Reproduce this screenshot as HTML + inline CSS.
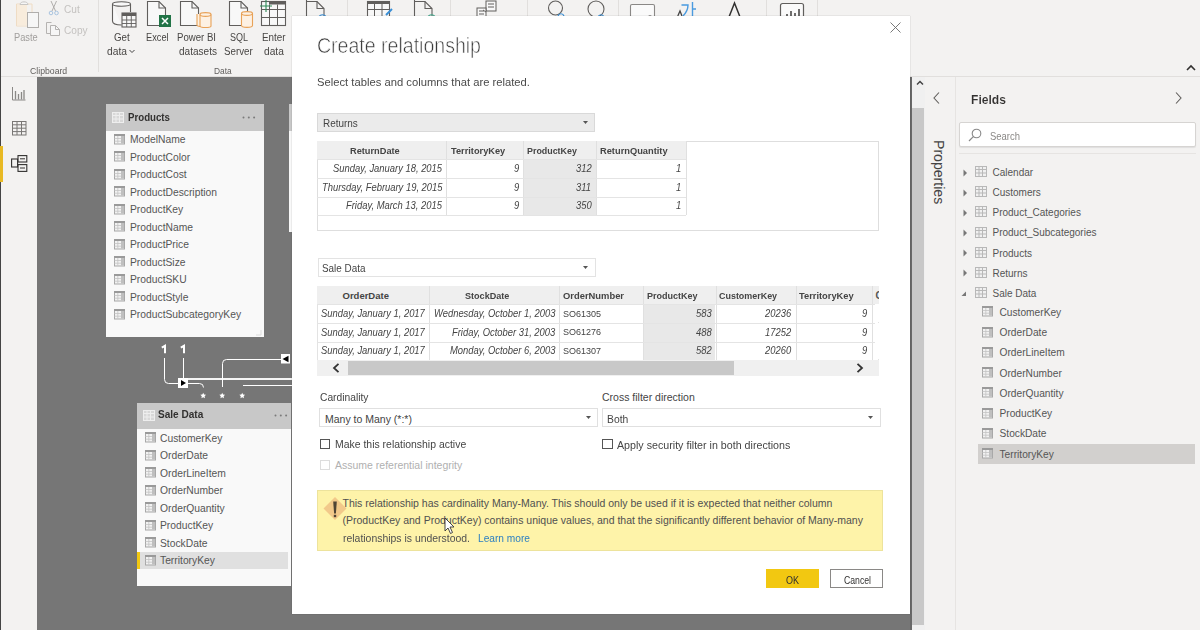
<!DOCTYPE html>
<html><head><meta charset="utf-8">
<style>
*{margin:0;padding:0;box-sizing:border-box}
html,body{width:1200px;height:630px;overflow:hidden;background:#f3f2f1;font-family:"Liberation Sans",sans-serif;color:#323130;position:relative}
.a{position:absolute}
.t{position:absolute;white-space:pre;line-height:1}
svg{position:absolute;overflow:visible}

</style></head><body>
<div class="a" style="left:0px;top:0px;width:1200px;height:76px;background:#f3f2f1"></div>
<div class="a" style="left:0px;top:76px;width:1200px;height:1px;background:#e1dfdd"></div>
<div class="a" style="left:0px;top:77px;width:37px;height:553px;background:#f3f2f1"></div>
<div class="a" style="left:0px;top:0px;width:1px;height:630px;background:#444"></div>
<div class="a" style="left:37px;top:77px;width:873px;height:553px;background:#767676"></div>
<div class="a" style="left:910px;top:77px;width:2px;height:553px;background:#686868"></div>
<div class="a" style="left:912px;top:77px;width:13px;height:553px;background:#f0f0f0"></div>
<div class="a" style="left:912px;top:108px;width:12px;height:517px;background:#c8c8c8"></div>
<div class="a" style="left:925px;top:77px;width:275px;height:553px;background:#f3f2f1"></div>
<div class="a" style="left:955px;top:77px;width:1px;height:553px;background:#e6e4e2"></div>
<div class="a" style="left:98px;top:0px;width:1px;height:72px;background:#e1dfdd"></div>
<div class="a" style="left:347px;top:0px;width:1px;height:72px;background:#e1dfdd"></div>
<div class="a" style="left:450px;top:0px;width:1px;height:72px;background:#e1dfdd"></div>
<div class="a" style="left:527px;top:0px;width:1px;height:72px;background:#e1dfdd"></div>
<div class="a" style="left:618px;top:0px;width:1px;height:72px;background:#e1dfdd"></div>
<div class="a" style="left:766px;top:0px;width:1px;height:72px;background:#e1dfdd"></div>
<div class="a" style="left:817px;top:0px;width:1px;height:72px;background:#e1dfdd"></div>
<div class="t" style="left:14.00px;top:32.73px;font-size:10px;color:#a19f9d;font-weight:normal;font-style:normal;transform:scaleX(0.9266);transform-origin:0 0;">Paste</div>
<div class="t" style="left:64.00px;top:5.03px;font-size:10px;color:#c4c2c0;font-weight:normal;font-style:normal;transform:scaleX(1.0088);transform-origin:0 0;">Cut</div>
<div class="t" style="left:64.00px;top:25.93px;font-size:10px;color:#c4c2c0;font-weight:normal;font-style:normal;transform:scaleX(1.0103);transform-origin:0 0;">Copy</div>
<div class="t" style="left:30.00px;top:67.32px;font-size:8.6px;color:#605e5c;font-weight:normal;font-style:normal;transform:scaleX(1.0110);transform-origin:0 0;">Clipboard</div>
<div class="t" style="left:114.00px;top:32.73px;font-size:10px;color:#484644;font-weight:normal;font-style:normal;transform:scaleX(0.9736);transform-origin:0 0;">Get</div>
<div class="t" style="left:107.00px;top:46.63px;font-size:10px;color:#484644;font-weight:normal;font-style:normal;transform:scaleX(1.0273);transform-origin:0 0;">data</div>
<div class="t" style="left:146.00px;top:32.73px;font-size:10px;color:#484644;font-weight:normal;font-style:normal;transform:scaleX(0.9242);transform-origin:0 0;">Excel</div>
<div class="t" style="left:177.00px;top:32.73px;font-size:10px;color:#484644;font-weight:normal;font-style:normal;transform:scaleX(0.9611);transform-origin:0 0;">Power BI</div>
<div class="t" style="left:179.00px;top:46.63px;font-size:10px;color:#484644;font-weight:normal;font-style:normal;transform:scaleX(1.0050);transform-origin:0 0;">datasets</div>
<div class="t" style="left:229.60px;top:32.73px;font-size:10px;color:#484644;font-weight:normal;font-style:normal;transform:scaleX(0.8993);transform-origin:0 0;">SQL</div>
<div class="t" style="left:224.30px;top:46.63px;font-size:10px;color:#484644;font-weight:normal;font-style:normal;transform:scaleX(0.9744);transform-origin:0 0;">Server</div>
<div class="t" style="left:261.70px;top:32.73px;font-size:10px;color:#484644;font-weight:normal;font-style:normal;transform:scaleX(0.9830);transform-origin:0 0;">Enter</div>
<div class="t" style="left:264.00px;top:46.63px;font-size:10px;color:#484644;font-weight:normal;font-style:normal;transform:scaleX(1.0170);transform-origin:0 0;">data</div>
<div class="t" style="left:213.50px;top:67.32px;font-size:8.6px;color:#605e5c;font-weight:normal;font-style:normal;transform:scaleX(0.9749);transform-origin:0 0;">Data</div>
<svg style="left:129px;top:49px" width="6" height="5"><path d="M0.5 1 L3 3.5 L5.5 1" stroke="#444" stroke-width="1" fill="none"/></svg>
<svg style="left:15px;top:0px" width="26" height="29"><path d="M1.5 4 V26 H12 M1.5 4 H5 M13 4 H17 V12" fill="none" stroke="#efdcc4" stroke-width="1"/><rect x="2" y="4.5" width="10" height="21" fill="#f8ecdc"/><path d="M5 4.5 C5 1 13 1 13 4.5 Z" fill="#f6f6f6" stroke="#c8c6c4"/><rect x="12.5" y="12.5" width="11" height="15" fill="#f6f6f6" stroke="#b0aeac" stroke-width="1"/></svg>
<svg style="left:48px;top:1px" width="11" height="15"><path d="M3 0 L7.5 10 M8.5 0 L4 10" stroke="#a8a6a4" stroke-width="0.9"/><circle cx="3" cy="12" r="1.8" fill="none" stroke="#a9c4e0"/><circle cx="8.5" cy="12" r="1.8" fill="none" stroke="#a9c4e0"/></svg>
<svg style="left:46px;top:22px" width="15" height="14"><path d="M5.5 11.5 H0.5 V0.5 H5.5" fill="none" stroke="#b5b3b1"/><path d="M4.5 3.5 H9.5 L13.5 7.5 V13.5 H4.5 Z" fill="#f6f6f6" stroke="#b5b3b1"/><path d="M9.5 3.5 V7.5 H13.5" fill="none" stroke="#b5b3b1"/></svg>
<svg style="left:111px;top:0px" width="26" height="29"><path d="M1.5 4 V21 C1.5 24 6 25 10.5 25 M1.5 4 C1.5 1 19.5 1 19.5 4 C19.5 7 1.5 7 1.5 4 M19.5 4 V12" stroke="#605e5c" stroke-width="1.1" fill="#f8f8f8"/><rect x="11" y="13" width="14" height="14" fill="#f8f8f8" stroke="#605e5c" stroke-width="1.1"/><rect x="11" y="13" width="14" height="3" fill="#605e5c"/><path d="M11 20 H25 M11 23.5 H25 M15.7 16 V27 M20.3 16 V27" stroke="#605e5c" stroke-width="0.9"/></svg>
<svg style="left:147px;top:1px" width="26" height="27"><path d="M0.5 0.5 H12 L18.5 7 V24.5 H0.5 Z" fill="#f8f8f8" stroke="#605e5c" stroke-width="1.1"/><path d="M12 0.5 V7 H18.5" fill="none" stroke="#605e5c" stroke-width="1.1"/><rect x="12" y="14" width="12" height="12" fill="#217346"/><path d="M15 17 L21 23 M21 17 L15 23" stroke="#fff" stroke-width="1.5"/></svg>
<svg style="left:180px;top:1px" width="34" height="27"><path d="M0.5 0.5 H12 L18.5 7 V24.5 H0.5 Z" fill="#f8f8f8" stroke="#605e5c" stroke-width="1.1"/><path d="M12 0.5 V7 H18.5" fill="none" stroke="#605e5c" stroke-width="1.1"/><path d="M17 13 V24 C17 26 27 26 27 24 V13" fill="#fdf1e3" stroke="#e8a258" stroke-width="1.1"/><path d="M20 13.5 C20 11 31 11 31 13.5 V25 C31 27 20 27 20 25 Z" fill="#fdf1e3" stroke="#e8a258" stroke-width="1.1"/><path d="M20 13.5 C20 16 31 16 31 13.5" fill="none" stroke="#e8a258" stroke-width="1.1"/></svg>
<svg style="left:229px;top:1px" width="26" height="27"><path d="M0.5 0.5 H12 L18.5 7 V24.5 H0.5 Z" fill="#f8f8f8" stroke="#605e5c" stroke-width="1.1"/><path d="M12 0.5 V7 H18.5" fill="none" stroke="#605e5c" stroke-width="1.1"/><path d="M12.5 12.5 C12.5 10 23.5 10 23.5 12.5 V24.5 C23.5 27 12.5 27 12.5 24.5 Z" fill="#fdf1e3" stroke="#e8a258" stroke-width="1.1"/><path d="M12.5 12.5 C12.5 15 23.5 15 23.5 12.5" fill="none" stroke="#e8a258" stroke-width="1.1"/></svg>
<svg style="left:260px;top:0px" width="28" height="27"><rect x="1.5" y="1.5" width="24" height="24" fill="#f8f8f8" stroke="#605e5c" stroke-width="1.1"/><rect x="9" y="1.5" width="16.5" height="3" fill="#605e5c"/><path d="M1.5 9.5 H25.5 M1.5 17.5 H25.5 M9.5 4.5 V25.5 M17.5 4.5 V25.5" stroke="#605e5c" stroke-width="1"/><path d="M6 0 V12 M0 6 H12" stroke="#2e8b57" stroke-width="1.1"/></svg>
<svg style="left:306px;top:0px" width="22" height="17"><path d="M0.5 -2 V17 M0.5 1.5 H11 L18 8.5 V17" fill="none" stroke="#605e5c" stroke-width="1.1"/><path d="M11 1.5 V8.5 H18" fill="none" stroke="#605e5c" stroke-width="1.1"/><path d="M13 17 C14 14 19 14 20 17" fill="none" stroke="#3a8fd6" stroke-width="1.2"/></svg>
<svg style="left:367px;top:0px" width="28" height="17"><rect x="0.5" y="1.5" width="22" height="18" fill="#f8f8f8" stroke="#605e5c" stroke-width="1.1"/><rect x="0.5" y="1" width="22" height="3" fill="#605e5c"/><path d="M0.5 9.5 H22 M7.5 4 V17 M15 4 V17" stroke="#605e5c" stroke-width="1"/><path d="M19 15 L25 9" stroke="#3a8fd6" stroke-width="2"/></svg>
<svg style="left:414px;top:0px" width="24" height="17"><path d="M0.5 -2 V17 M0.5 1.5 H11 L18 8.5 V17" fill="none" stroke="#605e5c" stroke-width="1.1"/><path d="M11 1.5 V8.5 H18" fill="none" stroke="#605e5c" stroke-width="1.1"/><path d="M14 17 C15 14 20 14 21 17" fill="none" stroke="#3fa68a" stroke-width="1.2"/></svg>
<svg style="left:476px;top:0px" width="26" height="17"><rect x="10" y="1" width="10" height="10" fill="#f8f8f8" stroke="#605e5c"/><path d="M12 4 H18 M12 7 H18" stroke="#605e5c"/><rect x="1" y="8" width="9" height="9" fill="#f8f8f8" stroke="#605e5c"/><path d="M3 11 H8 M3 14 H8" stroke="#605e5c"/><path d="M10 12 L7 10" stroke="#605e5c"/></svg>
<svg style="left:547px;top:0px" width="20" height="17"><circle cx="8.5" cy="8" r="7" fill="none" stroke="#605e5c" stroke-width="1.1"/><path d="M11 16 C12 13 16 13 17 16" fill="none" stroke="#3a8fd6" stroke-width="1.2"/></svg>
<svg style="left:587px;top:0px" width="20" height="17"><circle cx="9" cy="9" r="8" fill="none" stroke="#605e5c" stroke-width="1.1"/><path d="M11 17 C12 14 16 14 17 17" fill="none" stroke="#3a8fd6" stroke-width="1.2"/></svg>
<svg style="left:630px;top:4px" width="26" height="13"><rect x="0.5" y="0.5" width="24" height="18" rx="1.5" fill="#fafafa" stroke="#8a8886" stroke-width="1.1"/><path d="M18 13 C18 11 22 11 22 13" fill="none" stroke="#8a8886"/></svg>
<svg style="left:677px;top:2px" width="22" height="15"><path d="M0.8 14 L3 9 L5 14" fill="none" stroke="#444" stroke-width="1.3"/><path d="M4.5 3 H11 C11 8 9 11 6 14" fill="none" stroke="#4a9be0" stroke-width="1.4"/><path d="M15.5 0 V15 M15.5 7 H19" fill="none" stroke="#4a9be0" stroke-width="1.4"/></svg>
<svg style="left:728px;top:2px" width="13" height="15"><path d="M1 15 L6.5 1 L12 15" fill="none" stroke="#323130" stroke-width="1.5"/></svg>
<svg style="left:780px;top:3px" width="25" height="14"><rect x="0.5" y="0.5" width="23" height="18" rx="2" fill="#fafafa" stroke="#605e5c" stroke-width="1.2"/><path d="M7 13 V11 M11 13 V8 M15 13 V10 M19 13 V6" stroke="#323130" stroke-width="1.4"/></svg>
<svg style="left:1186px;top:64px" width="10" height="7"><path d="M1 6 L5 2 L9 6" fill="none" stroke="#323130" stroke-width="1.6"/></svg>
<div class="a" style="left:0px;top:146px;width:3px;height:36px;background:#e8b923"></div>
<svg style="left:12px;top:87px" width="14" height="14"><path d="M0.5 0 V13 H13.5" fill="none" stroke="#8a8886" stroke-width="1"/><path d="M3.5 4 V12.5 M6.5 7 V12.5 M9.5 5 V12.5 M12 3 V12.5" stroke="#8a8886" stroke-width="1.3"/></svg>
<svg style="left:12px;top:121px" width="15" height="15"><rect x="0.5" y="0.5" width="13.5" height="13.5" fill="none" stroke="#797775"/><path d="M0.5 3.8 H14 M0.5 7.2 H14 M0.5 10.6 H14 M5 0.5 V14 M9.5 0.5 V14" stroke="#797775" stroke-width="1"/></svg>
<svg style="left:11px;top:155px" width="17" height="18"><rect x="0.6" y="4" width="6" height="8" fill="none" stroke="#323130" stroke-width="1.1"/><rect x="7" y="0.6" width="8.8" height="6.4" fill="none" stroke="#323130" stroke-width="1.1"/><rect x="7" y="9.6" width="8.8" height="6.8" fill="none" stroke="#323130" stroke-width="1.1"/><path d="M9 3.8 H14 M9 13 H14" stroke="#323130" stroke-width="1"/></svg>
<div class="a" style="left:289px;top:104px;width:3px;height:128px;background:#f8f8f8"></div>
<div class="a" style="left:289px;top:104px;width:3px;height:27px;background:#c8c8c8"></div>
<div class="a" style="left:106px;top:104px;width:158px;height:233px;background:#f9f9f9"></div>
<div class="a" style="left:106px;top:104px;width:158px;height:27px;background:#c8c8c8"></div>
<svg style="left:112px;top:112px" width="12" height="11"><rect x="0.5" y="0.5" width="11" height="10" fill="#d8d8d8" stroke="#eeeeee"/><path d="M0.5 3.5 H11.5 M0.5 7 H11.5 M4 0.5 V10.5 M7.5 0.5 V10.5" stroke="#eeeeee" stroke-width="1"/></svg>
<div class="t" style="left:128.00px;top:111.69px;font-size:11px;color:#323130;font-weight:bold;font-style:normal;transform:scaleX(0.8807);transform-origin:0 0;">Products</div>
<svg style="left:242px;top:116px" width="14" height="3"><circle cx="1.5" cy="1.5" r="1" fill="#7a7a7a"/><circle cx="6.8" cy="1.5" r="1" fill="#7a7a7a"/><circle cx="12.1" cy="1.5" r="1" fill="#7a7a7a"/></svg>
<svg style="left:114.2px;top:133.60000000000002px" width="12" height="11"><rect x="0.5" y="0.5" width="10" height="9.5" fill="#f2f2f2" stroke="#a8a8a8"/><rect x="7" y="1" width="3" height="8.5" fill="#bfbfbf"/><rect x="0" y="0" width="11" height="2" fill="#9a9a9a"/><path d="M0.5 4.5 H7 M0.5 7.2 H7 M3.8 2 V9.5" stroke="#c4c4c4" stroke-width="0.8"/></svg>
<div class="t" style="left:130.00px;top:135.08px;font-size:10.3px;color:#555;font-weight:normal;font-style:normal;">ModelName</div>
<svg style="left:114.2px;top:151.10000000000002px" width="12" height="11"><rect x="0.5" y="0.5" width="10" height="9.5" fill="#f2f2f2" stroke="#a8a8a8"/><rect x="7" y="1" width="3" height="8.5" fill="#bfbfbf"/><rect x="0" y="0" width="11" height="2" fill="#9a9a9a"/><path d="M0.5 4.5 H7 M0.5 7.2 H7 M3.8 2 V9.5" stroke="#c4c4c4" stroke-width="0.8"/></svg>
<div class="t" style="left:130.00px;top:152.58px;font-size:10.3px;color:#555;font-weight:normal;font-style:normal;">ProductColor</div>
<svg style="left:114.2px;top:168.60000000000002px" width="12" height="11"><rect x="0.5" y="0.5" width="10" height="9.5" fill="#f2f2f2" stroke="#a8a8a8"/><rect x="7" y="1" width="3" height="8.5" fill="#bfbfbf"/><rect x="0" y="0" width="11" height="2" fill="#9a9a9a"/><path d="M0.5 4.5 H7 M0.5 7.2 H7 M3.8 2 V9.5" stroke="#c4c4c4" stroke-width="0.8"/></svg>
<div class="t" style="left:130.00px;top:170.08px;font-size:10.3px;color:#555;font-weight:normal;font-style:normal;">ProductCost</div>
<svg style="left:114.2px;top:186.10000000000002px" width="12" height="11"><rect x="0.5" y="0.5" width="10" height="9.5" fill="#f2f2f2" stroke="#a8a8a8"/><rect x="7" y="1" width="3" height="8.5" fill="#bfbfbf"/><rect x="0" y="0" width="11" height="2" fill="#9a9a9a"/><path d="M0.5 4.5 H7 M0.5 7.2 H7 M3.8 2 V9.5" stroke="#c4c4c4" stroke-width="0.8"/></svg>
<div class="t" style="left:130.00px;top:187.58px;font-size:10.3px;color:#555;font-weight:normal;font-style:normal;">ProductDescription</div>
<svg style="left:114.2px;top:203.60000000000002px" width="12" height="11"><rect x="0.5" y="0.5" width="10" height="9.5" fill="#f2f2f2" stroke="#a8a8a8"/><rect x="7" y="1" width="3" height="8.5" fill="#bfbfbf"/><rect x="0" y="0" width="11" height="2" fill="#9a9a9a"/><path d="M0.5 4.5 H7 M0.5 7.2 H7 M3.8 2 V9.5" stroke="#c4c4c4" stroke-width="0.8"/></svg>
<div class="t" style="left:130.00px;top:205.08px;font-size:10.3px;color:#555;font-weight:normal;font-style:normal;">ProductKey</div>
<svg style="left:114.2px;top:221.10000000000002px" width="12" height="11"><rect x="0.5" y="0.5" width="10" height="9.5" fill="#f2f2f2" stroke="#a8a8a8"/><rect x="7" y="1" width="3" height="8.5" fill="#bfbfbf"/><rect x="0" y="0" width="11" height="2" fill="#9a9a9a"/><path d="M0.5 4.5 H7 M0.5 7.2 H7 M3.8 2 V9.5" stroke="#c4c4c4" stroke-width="0.8"/></svg>
<div class="t" style="left:130.00px;top:222.58px;font-size:10.3px;color:#555;font-weight:normal;font-style:normal;">ProductName</div>
<svg style="left:114.2px;top:238.60000000000002px" width="12" height="11"><rect x="0.5" y="0.5" width="10" height="9.5" fill="#f2f2f2" stroke="#a8a8a8"/><rect x="7" y="1" width="3" height="8.5" fill="#bfbfbf"/><rect x="0" y="0" width="11" height="2" fill="#9a9a9a"/><path d="M0.5 4.5 H7 M0.5 7.2 H7 M3.8 2 V9.5" stroke="#c4c4c4" stroke-width="0.8"/></svg>
<div class="t" style="left:130.00px;top:240.08px;font-size:10.3px;color:#555;font-weight:normal;font-style:normal;">ProductPrice</div>
<svg style="left:114.2px;top:256.09999999999997px" width="12" height="11"><rect x="0.5" y="0.5" width="10" height="9.5" fill="#f2f2f2" stroke="#a8a8a8"/><rect x="7" y="1" width="3" height="8.5" fill="#bfbfbf"/><rect x="0" y="0" width="11" height="2" fill="#9a9a9a"/><path d="M0.5 4.5 H7 M0.5 7.2 H7 M3.8 2 V9.5" stroke="#c4c4c4" stroke-width="0.8"/></svg>
<div class="t" style="left:130.00px;top:257.58px;font-size:10.3px;color:#555;font-weight:normal;font-style:normal;">ProductSize</div>
<svg style="left:114.2px;top:273.59999999999997px" width="12" height="11"><rect x="0.5" y="0.5" width="10" height="9.5" fill="#f2f2f2" stroke="#a8a8a8"/><rect x="7" y="1" width="3" height="8.5" fill="#bfbfbf"/><rect x="0" y="0" width="11" height="2" fill="#9a9a9a"/><path d="M0.5 4.5 H7 M0.5 7.2 H7 M3.8 2 V9.5" stroke="#c4c4c4" stroke-width="0.8"/></svg>
<div class="t" style="left:130.00px;top:275.08px;font-size:10.3px;color:#555;font-weight:normal;font-style:normal;">ProductSKU</div>
<svg style="left:114.2px;top:291.09999999999997px" width="12" height="11"><rect x="0.5" y="0.5" width="10" height="9.5" fill="#f2f2f2" stroke="#a8a8a8"/><rect x="7" y="1" width="3" height="8.5" fill="#bfbfbf"/><rect x="0" y="0" width="11" height="2" fill="#9a9a9a"/><path d="M0.5 4.5 H7 M0.5 7.2 H7 M3.8 2 V9.5" stroke="#c4c4c4" stroke-width="0.8"/></svg>
<div class="t" style="left:130.00px;top:292.58px;font-size:10.3px;color:#555;font-weight:normal;font-style:normal;">ProductStyle</div>
<svg style="left:114.2px;top:308.59999999999997px" width="12" height="11"><rect x="0.5" y="0.5" width="10" height="9.5" fill="#f2f2f2" stroke="#a8a8a8"/><rect x="7" y="1" width="3" height="8.5" fill="#bfbfbf"/><rect x="0" y="0" width="11" height="2" fill="#9a9a9a"/><path d="M0.5 4.5 H7 M0.5 7.2 H7 M3.8 2 V9.5" stroke="#c4c4c4" stroke-width="0.8"/></svg>
<div class="t" style="left:130.00px;top:310.08px;font-size:10.3px;color:#555;font-weight:normal;font-style:normal;">ProductSubcategoryKey</div>
<svg style="left:256px;top:330px" width="6" height="6"><path d="M5 0 V5 H0" fill="none" stroke="#ddd"/></svg>
<svg style="left:150px;top:340px" width="145" height="65">
<path d="M14.5 18 V39.5 Q14.5 43.5 18.5 43.5 H30" fill="none" stroke="#fff" stroke-width="1"/>
<path d="M33.5 18 V38" fill="none" stroke="#fff" stroke-width="1"/>
<path d="M37 39 H145" fill="none" stroke="#f4f4f4" stroke-width="2"/>
<path d="M37 43.5 H49.5 Q53.5 43.5 53.5 47.5" fill="none" stroke="#fff" stroke-width="1"/>
<path d="M72.5 47 V23.5 Q72.5 19.5 76.5 19.5 H131" fill="none" stroke="#fff" stroke-width="1"/>
<path d="M93 45.5 H145" fill="none" stroke="#fff" stroke-width="1"/>
<rect x="28" y="38" width="10" height="10" fill="#fff"/>
<path d="M31 40 L36 43 L31 46 Z" fill="#000"/>
<rect x="131" y="14" width="9" height="9.5" fill="#fff"/>
<path d="M138.5 15.8 L132.5 19 L138.5 22.2 Z" fill="#000"/>
<polygon points="53.20,52.80 54.08,54.59 56.05,54.87 54.63,56.26 54.96,58.23 53.20,57.30 51.44,58.23 51.77,56.26 50.35,54.87 52.32,54.59" fill="#fff"/><polygon points="72.20,52.80 73.08,54.59 75.05,54.87 73.63,56.26 73.96,58.23 72.20,57.30 70.44,58.23 70.77,56.26 69.35,54.87 71.32,54.59" fill="#fff"/><polygon points="92.20,52.80 93.08,54.59 95.05,54.87 93.63,56.26 93.96,58.23 92.20,57.30 90.44,58.23 90.77,56.26 89.35,54.87 91.32,54.59" fill="#fff"/>
</svg>
<svg style="left:160px;top:345px" width="30" height="9"><path d="M1.8 2.6 L5 0.8 V8.2 M20.8 2.6 L24 0.8 V8.2" fill="none" stroke="#fff" stroke-width="2"/></svg>
<div class="a" style="left:137px;top:402.5px;width:154px;height:183.5px;background:#f9f9f9"></div>
<div class="a" style="left:137px;top:402.5px;width:154px;height:26px;background:#c8c8c8"></div>
<svg style="left:143px;top:410px" width="12" height="11"><rect x="0.5" y="0.5" width="11" height="10" fill="#d8d8d8" stroke="#eeeeee"/><path d="M0.5 3.5 H11.5 M0.5 7 H11.5 M4 0.5 V10.5 M7.5 0.5 V10.5" stroke="#eeeeee" stroke-width="1"/></svg>
<div class="t" style="left:158.00px;top:409.29px;font-size:11px;color:#323130;font-weight:bold;font-style:normal;transform:scaleX(0.9146);transform-origin:0 0;">Sale Data</div>
<svg style="left:274px;top:414px" width="14" height="3"><circle cx="1.5" cy="1.5" r="1" fill="#7a7a7a"/><circle cx="6.8" cy="1.5" r="1" fill="#7a7a7a"/><circle cx="12.1" cy="1.5" r="1" fill="#7a7a7a"/></svg>
<div class="a" style="left:137px;top:552px;width:151px;height:17px;background:#e0e0e0"></div>
<div class="a" style="left:137px;top:552px;width:3px;height:17px;background:#f2c811"></div>
<svg style="left:145px;top:432.09999999999997px" width="12" height="11"><rect x="0.5" y="0.5" width="10" height="9.5" fill="#f2f2f2" stroke="#a8a8a8"/><rect x="7" y="1" width="3" height="8.5" fill="#bfbfbf"/><rect x="0" y="0" width="11" height="2" fill="#9a9a9a"/><path d="M0.5 4.5 H7 M0.5 7.2 H7 M3.8 2 V9.5" stroke="#c4c4c4" stroke-width="0.8"/></svg>
<div class="t" style="left:160.00px;top:433.58px;font-size:10.3px;color:#555;font-weight:normal;font-style:normal;">CustomerKey</div>
<svg style="left:145px;top:449.59999999999997px" width="12" height="11"><rect x="0.5" y="0.5" width="10" height="9.5" fill="#f2f2f2" stroke="#a8a8a8"/><rect x="7" y="1" width="3" height="8.5" fill="#bfbfbf"/><rect x="0" y="0" width="11" height="2" fill="#9a9a9a"/><path d="M0.5 4.5 H7 M0.5 7.2 H7 M3.8 2 V9.5" stroke="#c4c4c4" stroke-width="0.8"/></svg>
<div class="t" style="left:160.00px;top:451.08px;font-size:10.3px;color:#555;font-weight:normal;font-style:normal;">OrderDate</div>
<svg style="left:145px;top:467.09999999999997px" width="12" height="11"><rect x="0.5" y="0.5" width="10" height="9.5" fill="#f2f2f2" stroke="#a8a8a8"/><rect x="7" y="1" width="3" height="8.5" fill="#bfbfbf"/><rect x="0" y="0" width="11" height="2" fill="#9a9a9a"/><path d="M0.5 4.5 H7 M0.5 7.2 H7 M3.8 2 V9.5" stroke="#c4c4c4" stroke-width="0.8"/></svg>
<div class="t" style="left:160.00px;top:468.58px;font-size:10.3px;color:#555;font-weight:normal;font-style:normal;">OrderLineItem</div>
<svg style="left:145px;top:484.59999999999997px" width="12" height="11"><rect x="0.5" y="0.5" width="10" height="9.5" fill="#f2f2f2" stroke="#a8a8a8"/><rect x="7" y="1" width="3" height="8.5" fill="#bfbfbf"/><rect x="0" y="0" width="11" height="2" fill="#9a9a9a"/><path d="M0.5 4.5 H7 M0.5 7.2 H7 M3.8 2 V9.5" stroke="#c4c4c4" stroke-width="0.8"/></svg>
<div class="t" style="left:160.00px;top:486.08px;font-size:10.3px;color:#555;font-weight:normal;font-style:normal;">OrderNumber</div>
<svg style="left:145px;top:502.09999999999997px" width="12" height="11"><rect x="0.5" y="0.5" width="10" height="9.5" fill="#f2f2f2" stroke="#a8a8a8"/><rect x="7" y="1" width="3" height="8.5" fill="#bfbfbf"/><rect x="0" y="0" width="11" height="2" fill="#9a9a9a"/><path d="M0.5 4.5 H7 M0.5 7.2 H7 M3.8 2 V9.5" stroke="#c4c4c4" stroke-width="0.8"/></svg>
<div class="t" style="left:160.00px;top:503.58px;font-size:10.3px;color:#555;font-weight:normal;font-style:normal;">OrderQuantity</div>
<svg style="left:145px;top:519.5999999999999px" width="12" height="11"><rect x="0.5" y="0.5" width="10" height="9.5" fill="#f2f2f2" stroke="#a8a8a8"/><rect x="7" y="1" width="3" height="8.5" fill="#bfbfbf"/><rect x="0" y="0" width="11" height="2" fill="#9a9a9a"/><path d="M0.5 4.5 H7 M0.5 7.2 H7 M3.8 2 V9.5" stroke="#c4c4c4" stroke-width="0.8"/></svg>
<div class="t" style="left:160.00px;top:521.08px;font-size:10.3px;color:#555;font-weight:normal;font-style:normal;">ProductKey</div>
<svg style="left:145px;top:537.0999999999999px" width="12" height="11"><rect x="0.5" y="0.5" width="10" height="9.5" fill="#f2f2f2" stroke="#a8a8a8"/><rect x="7" y="1" width="3" height="8.5" fill="#bfbfbf"/><rect x="0" y="0" width="11" height="2" fill="#9a9a9a"/><path d="M0.5 4.5 H7 M0.5 7.2 H7 M3.8 2 V9.5" stroke="#c4c4c4" stroke-width="0.8"/></svg>
<div class="t" style="left:160.00px;top:538.58px;font-size:10.3px;color:#555;font-weight:normal;font-style:normal;">StockDate</div>
<svg style="left:145px;top:554.5999999999999px" width="12" height="11"><rect x="0.5" y="0.5" width="10" height="9.5" fill="#f2f2f2" stroke="#a8a8a8"/><rect x="7" y="1" width="3" height="8.5" fill="#bfbfbf"/><rect x="0" y="0" width="11" height="2" fill="#9a9a9a"/><path d="M0.5 4.5 H7 M0.5 7.2 H7 M3.8 2 V9.5" stroke="#c4c4c4" stroke-width="0.8"/></svg>
<div class="t" style="left:160.00px;top:556.08px;font-size:10.3px;color:#555;font-weight:normal;font-style:normal;">TerritoryKey</div>
<svg style="left:916px;top:80px" width="8" height="5"><path d="M1 4.5 L4 1.5 L7 4.5" fill="none" stroke="#444" stroke-width="1.5"/></svg>
<svg style="left:933px;top:92px" width="7" height="12"><path d="M6 0.5 L1 6 L6 11.5" fill="none" stroke="#605e5c" stroke-width="1.1"/></svg>
<div class="t" style="left:0.00px;top:0.00px;font-size:13.8px;color:#444;font-weight:normal;font-style:normal;transform:translate(931.60px,140.00px) rotate(90deg) scaleX(1.0208) translate(0,-13.80px);transform-origin:0 0;">Properties</div>
<div class="t" style="left:971.00px;top:92.79px;font-size:13px;color:#323130;font-weight:bold;font-style:normal;transform:scaleX(0.9314);transform-origin:0 0;-webkit-text-stroke:0.12px #f3f2f1;">Fields</div>
<svg style="left:1175px;top:92px" width="7" height="12"><path d="M1 0.5 L6 6 L1 11.5" fill="none" stroke="#605e5c" stroke-width="1.1"/></svg>
<div class="a" style="left:959px;top:122px;width:237px;height:25px;background:#fff;border:1px solid #d6d4d2;border-radius:2px;box-shadow:0 1px 1px rgba(0,0,0,.08)"></div>
<svg style="left:968px;top:128px" width="14" height="14"><circle cx="8.5" cy="5.5" r="4.3" fill="none" stroke="#888" stroke-width="1.1"/><path d="M5.3 8.7 L1 13" stroke="#888" stroke-width="1.2"/></svg>
<div class="t" style="left:990.00px;top:131.11px;font-size:10.5px;color:#8a8886;font-weight:normal;font-style:normal;transform:scaleX(0.9014);transform-origin:0 0;">Search</div>
<div class="a" style="left:959px;top:153px;width:237px;height:1px;background:#e6e4e2"></div>
<svg style="left:963px;top:168.6px" width="5" height="8"><path d="M0.5 0.5 L4 4 L0.5 7.5 Z" fill="#777"/></svg>
<svg style="left:975px;top:166.1px" width="12" height="11"><rect x="0.5" y="0.5" width="11" height="10" fill="#f0f0f0" stroke="#b8b8b8"/><path d="M0.5 3.5 H11.5 M0.5 7 H11.5 M4 0.5 V10.5 M7.5 0.5 V10.5" stroke="#b8b8b8" stroke-width="1"/></svg>
<div class="t" style="left:992.50px;top:167.93px;font-size:10px;color:#555;font-weight:normal;font-style:normal;">Calendar</div>
<svg style="left:963px;top:188.75px" width="5" height="8"><path d="M0.5 0.5 L4 4 L0.5 7.5 Z" fill="#777"/></svg>
<svg style="left:975px;top:186.25px" width="12" height="11"><rect x="0.5" y="0.5" width="11" height="10" fill="#f0f0f0" stroke="#b8b8b8"/><path d="M0.5 3.5 H11.5 M0.5 7 H11.5 M4 0.5 V10.5 M7.5 0.5 V10.5" stroke="#b8b8b8" stroke-width="1"/></svg>
<div class="t" style="left:992.50px;top:188.08px;font-size:10px;color:#555;font-weight:normal;font-style:normal;">Customers</div>
<svg style="left:963px;top:208.89999999999998px" width="5" height="8"><path d="M0.5 0.5 L4 4 L0.5 7.5 Z" fill="#777"/></svg>
<svg style="left:975px;top:206.39999999999998px" width="12" height="11"><rect x="0.5" y="0.5" width="11" height="10" fill="#f0f0f0" stroke="#b8b8b8"/><path d="M0.5 3.5 H11.5 M0.5 7 H11.5 M4 0.5 V10.5 M7.5 0.5 V10.5" stroke="#b8b8b8" stroke-width="1"/></svg>
<div class="t" style="left:992.50px;top:208.23px;font-size:10px;color:#555;font-weight:normal;font-style:normal;">Product_Categories</div>
<svg style="left:963px;top:229.04999999999998px" width="5" height="8"><path d="M0.5 0.5 L4 4 L0.5 7.5 Z" fill="#777"/></svg>
<svg style="left:975px;top:226.54999999999998px" width="12" height="11"><rect x="0.5" y="0.5" width="11" height="10" fill="#f0f0f0" stroke="#b8b8b8"/><path d="M0.5 3.5 H11.5 M0.5 7 H11.5 M4 0.5 V10.5 M7.5 0.5 V10.5" stroke="#b8b8b8" stroke-width="1"/></svg>
<div class="t" style="left:992.50px;top:228.38px;font-size:10px;color:#555;font-weight:normal;font-style:normal;">Product_Subcategories</div>
<svg style="left:963px;top:249.2px" width="5" height="8"><path d="M0.5 0.5 L4 4 L0.5 7.5 Z" fill="#777"/></svg>
<svg style="left:975px;top:246.7px" width="12" height="11"><rect x="0.5" y="0.5" width="11" height="10" fill="#f0f0f0" stroke="#b8b8b8"/><path d="M0.5 3.5 H11.5 M0.5 7 H11.5 M4 0.5 V10.5 M7.5 0.5 V10.5" stroke="#b8b8b8" stroke-width="1"/></svg>
<div class="t" style="left:992.50px;top:248.53px;font-size:10px;color:#555;font-weight:normal;font-style:normal;">Products</div>
<svg style="left:963px;top:269.35px" width="5" height="8"><path d="M0.5 0.5 L4 4 L0.5 7.5 Z" fill="#777"/></svg>
<svg style="left:975px;top:266.85px" width="12" height="11"><rect x="0.5" y="0.5" width="11" height="10" fill="#f0f0f0" stroke="#b8b8b8"/><path d="M0.5 3.5 H11.5 M0.5 7 H11.5 M4 0.5 V10.5 M7.5 0.5 V10.5" stroke="#b8b8b8" stroke-width="1"/></svg>
<div class="t" style="left:992.50px;top:268.68px;font-size:10px;color:#555;font-weight:normal;font-style:normal;">Returns</div>
<svg style="left:961px;top:290.5px" width="6" height="6"><path d="M5 0.5 V5 H0.5 Z" fill="#777"/></svg>
<svg style="left:975px;top:287.0px" width="12" height="11"><rect x="0.5" y="0.5" width="11" height="10" fill="#f0f0f0" stroke="#b8b8b8"/><path d="M0.5 3.5 H11.5 M0.5 7 H11.5 M4 0.5 V10.5 M7.5 0.5 V10.5" stroke="#b8b8b8" stroke-width="1"/></svg>
<div class="t" style="left:992.50px;top:288.83px;font-size:10px;color:#555;font-weight:normal;font-style:normal;">Sale Data</div>
<div class="a" style="left:978px;top:444px;width:217px;height:20px;background:#d2d0ce"></div>
<svg style="left:982px;top:306.44999999999993px" width="12" height="11"><rect x="0.5" y="0.5" width="10" height="9.5" fill="#f2f2f2" stroke="#a8a8a8"/><rect x="7" y="1" width="3" height="8.5" fill="#bfbfbf"/><rect x="0" y="0" width="11" height="2" fill="#9a9a9a"/><path d="M0.5 4.5 H7 M0.5 7.2 H7 M3.8 2 V9.5" stroke="#c4c4c4" stroke-width="0.8"/></svg>
<div class="t" style="left:999.50px;top:307.81px;font-size:10.2px;color:#555;font-weight:normal;font-style:normal;">CustomerKey</div>
<svg style="left:982px;top:326.69999999999993px" width="12" height="11"><rect x="0.5" y="0.5" width="10" height="9.5" fill="#f2f2f2" stroke="#a8a8a8"/><rect x="7" y="1" width="3" height="8.5" fill="#bfbfbf"/><rect x="0" y="0" width="11" height="2" fill="#9a9a9a"/><path d="M0.5 4.5 H7 M0.5 7.2 H7 M3.8 2 V9.5" stroke="#c4c4c4" stroke-width="0.8"/></svg>
<div class="t" style="left:999.50px;top:328.06px;font-size:10.2px;color:#555;font-weight:normal;font-style:normal;">OrderDate</div>
<svg style="left:982px;top:346.94999999999993px" width="12" height="11"><rect x="0.5" y="0.5" width="10" height="9.5" fill="#f2f2f2" stroke="#a8a8a8"/><rect x="7" y="1" width="3" height="8.5" fill="#bfbfbf"/><rect x="0" y="0" width="11" height="2" fill="#9a9a9a"/><path d="M0.5 4.5 H7 M0.5 7.2 H7 M3.8 2 V9.5" stroke="#c4c4c4" stroke-width="0.8"/></svg>
<div class="t" style="left:999.50px;top:348.31px;font-size:10.2px;color:#555;font-weight:normal;font-style:normal;">OrderLineItem</div>
<svg style="left:982px;top:367.19999999999993px" width="12" height="11"><rect x="0.5" y="0.5" width="10" height="9.5" fill="#f2f2f2" stroke="#a8a8a8"/><rect x="7" y="1" width="3" height="8.5" fill="#bfbfbf"/><rect x="0" y="0" width="11" height="2" fill="#9a9a9a"/><path d="M0.5 4.5 H7 M0.5 7.2 H7 M3.8 2 V9.5" stroke="#c4c4c4" stroke-width="0.8"/></svg>
<div class="t" style="left:999.50px;top:368.56px;font-size:10.2px;color:#555;font-weight:normal;font-style:normal;">OrderNumber</div>
<svg style="left:982px;top:387.44999999999993px" width="12" height="11"><rect x="0.5" y="0.5" width="10" height="9.5" fill="#f2f2f2" stroke="#a8a8a8"/><rect x="7" y="1" width="3" height="8.5" fill="#bfbfbf"/><rect x="0" y="0" width="11" height="2" fill="#9a9a9a"/><path d="M0.5 4.5 H7 M0.5 7.2 H7 M3.8 2 V9.5" stroke="#c4c4c4" stroke-width="0.8"/></svg>
<div class="t" style="left:999.50px;top:388.81px;font-size:10.2px;color:#555;font-weight:normal;font-style:normal;">OrderQuantity</div>
<svg style="left:982px;top:407.69999999999993px" width="12" height="11"><rect x="0.5" y="0.5" width="10" height="9.5" fill="#f2f2f2" stroke="#a8a8a8"/><rect x="7" y="1" width="3" height="8.5" fill="#bfbfbf"/><rect x="0" y="0" width="11" height="2" fill="#9a9a9a"/><path d="M0.5 4.5 H7 M0.5 7.2 H7 M3.8 2 V9.5" stroke="#c4c4c4" stroke-width="0.8"/></svg>
<div class="t" style="left:999.50px;top:409.06px;font-size:10.2px;color:#555;font-weight:normal;font-style:normal;">ProductKey</div>
<svg style="left:982px;top:427.94999999999993px" width="12" height="11"><rect x="0.5" y="0.5" width="10" height="9.5" fill="#f2f2f2" stroke="#a8a8a8"/><rect x="7" y="1" width="3" height="8.5" fill="#bfbfbf"/><rect x="0" y="0" width="11" height="2" fill="#9a9a9a"/><path d="M0.5 4.5 H7 M0.5 7.2 H7 M3.8 2 V9.5" stroke="#c4c4c4" stroke-width="0.8"/></svg>
<div class="t" style="left:999.50px;top:429.31px;font-size:10.2px;color:#555;font-weight:normal;font-style:normal;">StockDate</div>
<svg style="left:982px;top:448.19999999999993px" width="12" height="11"><rect x="0.5" y="0.5" width="10" height="9.5" fill="#f2f2f2" stroke="#a8a8a8"/><rect x="7" y="1" width="3" height="8.5" fill="#bfbfbf"/><rect x="0" y="0" width="11" height="2" fill="#9a9a9a"/><path d="M0.5 4.5 H7 M0.5 7.2 H7 M3.8 2 V9.5" stroke="#c4c4c4" stroke-width="0.8"/></svg>
<div class="t" style="left:999.50px;top:449.56px;font-size:10.2px;color:#555;font-weight:normal;font-style:normal;">TerritoryKey</div>
<div class="a" style="left:291.5px;top:16.3px;width:618.3px;height:597.3px;background:#fff;box-shadow:0 0 1px 0 rgba(0,0,0,.3)"></div>
<svg style="left:890px;top:22px" width="11" height="11"><path d="M0.5 0.5 L10.5 10.5 M10.5 0.5 L0.5 10.5" stroke="#6a6a6a" stroke-width="0.9"/></svg>
<div class="t" style="left:317.20px;top:36.40px;font-size:21.5px;color:#3a3a3a;font-weight:normal;font-style:normal;transform:scaleX(0.9087);transform-origin:0 0;-webkit-text-stroke:0.6px #fff;">Create relationship</div>
<div class="t" style="left:317.00px;top:76.71px;font-size:11.8px;color:#4a4a4a;font-weight:normal;font-style:normal;transform:scaleX(0.9525);transform-origin:0 0;">Select tables and columns that are related.</div>
<div class="a" style="left:317px;top:113px;width:278px;height:19px;background:#ebebeb;border:1px solid #d9d9d9"></div>
<div class="t" style="left:322.50px;top:119.23px;font-size:10px;color:#444;font-weight:normal;font-style:normal;transform:scaleX(0.9938);transform-origin:0 0;">Returns</div>
<svg style="left:583px;top:121px" width="5" height="3"><path d="M0 0 H5 L2.5 3 Z" fill="#555"/></svg>
<div class="a" style="left:317px;top:141px;width:562px;height:90px;background:#fff;border:1px solid #dedede"></div>
<div class="a" style="left:317px;top:141px;width:369px;height:18px;background:#efefef"></div>
<div class="a" style="left:523px;top:159px;width:73px;height:56px;background:#e8e8e8"></div>
<div class="a" style="left:446px;top:141px;width:1px;height:74px;background:#e0e0e0"></div>
<div class="a" style="left:523px;top:141px;width:1px;height:74px;background:#e0e0e0"></div>
<div class="a" style="left:596px;top:141px;width:1px;height:74px;background:#e0e0e0"></div>
<div class="a" style="left:686px;top:141px;width:1px;height:74px;background:#e0e0e0"></div>
<div class="a" style="left:317px;top:159px;width:369px;height:1px;background:#e4e4e4"></div>
<div class="a" style="left:317px;top:178px;width:369px;height:1px;background:#e4e4e4"></div>
<div class="a" style="left:317px;top:196.5px;width:369px;height:1px;background:#e4e4e4"></div>
<div class="a" style="left:317px;top:215px;width:369px;height:1px;background:#e4e4e4"></div>
<div class="t" style="left:350.00px;top:145.66px;font-size:9.5px;color:#444;font-weight:bold;font-style:normal;transform:scaleX(0.9716);transform-origin:0 0;">ReturnDate</div>
<div class="t" style="left:450.80px;top:145.66px;font-size:9.5px;color:#444;font-weight:bold;font-style:normal;transform:scaleX(0.9714);transform-origin:0 0;">TerritoryKey</div>
<div class="t" style="left:527.30px;top:145.66px;font-size:9.5px;color:#444;font-weight:bold;font-style:normal;transform:scaleX(0.9357);transform-origin:0 0;">ProductKey</div>
<div class="t" style="left:599.90px;top:145.66px;font-size:9.5px;color:#444;font-weight:bold;font-style:normal;transform:scaleX(0.9777);transform-origin:0 0;">ReturnQuantity</div>
<div class="t" style="left:333.20px;top:164.33px;font-size:10px;color:#444;font-weight:normal;font-style:italic;transform:scaleX(0.9400);transform-origin:0 0;">Sunday, January 18, 2015</div>
<div class="t" style="left:513.77px;top:164.33px;font-size:10px;color:#444;font-weight:normal;font-style:italic;transform:scaleX(0.9400);transform-origin:0 0;">9</div>
<div class="t" style="left:575.51px;top:164.33px;font-size:10px;color:#444;font-weight:normal;font-style:italic;transform:scaleX(0.9400);transform-origin:0 0;">312</div>
<div class="t" style="left:675.97px;top:164.33px;font-size:10px;color:#444;font-weight:normal;font-style:italic;transform:scaleX(0.9400);transform-origin:0 0;">1</div>
<div class="t" style="left:321.72px;top:182.83px;font-size:10px;color:#444;font-weight:normal;font-style:italic;transform:scaleX(0.9400);transform-origin:0 0;">Thursday, February 19, 2015</div>
<div class="t" style="left:513.77px;top:182.83px;font-size:10px;color:#444;font-weight:normal;font-style:italic;transform:scaleX(0.9400);transform-origin:0 0;">9</div>
<div class="t" style="left:576.20px;top:182.83px;font-size:10px;color:#444;font-weight:normal;font-style:italic;transform:scaleX(0.9400);transform-origin:0 0;">311</div>
<div class="t" style="left:675.97px;top:182.83px;font-size:10px;color:#444;font-weight:normal;font-style:italic;transform:scaleX(0.9400);transform-origin:0 0;">1</div>
<div class="t" style="left:346.28px;top:201.33px;font-size:10px;color:#444;font-weight:normal;font-style:italic;transform:scaleX(0.9400);transform-origin:0 0;">Friday, March 13, 2015</div>
<div class="t" style="left:513.77px;top:201.33px;font-size:10px;color:#444;font-weight:normal;font-style:italic;transform:scaleX(0.9400);transform-origin:0 0;">9</div>
<div class="t" style="left:575.51px;top:201.33px;font-size:10px;color:#444;font-weight:normal;font-style:italic;transform:scaleX(0.9400);transform-origin:0 0;">350</div>
<div class="t" style="left:675.97px;top:201.33px;font-size:10px;color:#444;font-weight:normal;font-style:italic;transform:scaleX(0.9400);transform-origin:0 0;">1</div>
<div class="a" style="left:317.5px;top:258px;width:278px;height:19px;background:#fff;border:1px solid #e3e3e3"></div>
<div class="t" style="left:322.00px;top:264.23px;font-size:10px;color:#444;font-weight:normal;font-style:normal;transform:scaleX(0.9881);transform-origin:0 0;">Sale Data</div>
<svg style="left:583px;top:266px" width="5" height="3"><path d="M0 0 H5 L2.5 3 Z" fill="#555"/></svg>
<div class="a" style="left:317px;top:285.5px;width:562px;height:90.5px;background:#fff;border:1px solid #e3e3e3"></div>
<div class="a" style="left:317px;top:285.5px;width:562px;height:18.5px;background:#efefef"></div>
<div class="a" style="left:643px;top:304px;width:72px;height:56px;background:#e8e8e8"></div>
<div class="a" style="left:428.7px;top:286px;width:1px;height:74px;background:#e0e0e0"></div>
<div class="a" style="left:559.2px;top:286px;width:1px;height:74px;background:#e0e0e0"></div>
<div class="a" style="left:643.2px;top:286px;width:1px;height:74px;background:#e0e0e0"></div>
<div class="a" style="left:715.5px;top:286px;width:1px;height:74px;background:#e0e0e0"></div>
<div class="a" style="left:795.5px;top:286px;width:1px;height:74px;background:#e0e0e0"></div>
<div class="a" style="left:871.5px;top:286px;width:1px;height:74px;background:#e0e0e0"></div>
<div class="a" style="left:317px;top:304px;width:562px;height:1px;background:#e4e4e4"></div>
<div class="a" style="left:317px;top:323px;width:562px;height:1px;background:#e4e4e4"></div>
<div class="a" style="left:317px;top:341.5px;width:562px;height:1px;background:#e4e4e4"></div>
<div class="a" style="left:317px;top:359.5px;width:562px;height:1px;background:#e4e4e4"></div>
<div class="t" style="left:342.50px;top:290.66px;font-size:9.5px;color:#444;font-weight:bold;font-style:normal;">OrderDate</div>
<div class="t" style="left:464.50px;top:290.66px;font-size:9.5px;color:#444;font-weight:bold;font-style:normal;transform:scaleX(0.9555);transform-origin:0 0;">StockDate</div>
<div class="t" style="left:563.00px;top:290.66px;font-size:9.5px;color:#444;font-weight:bold;font-style:normal;transform:scaleX(0.9876);transform-origin:0 0;">OrderNumber</div>
<div class="t" style="left:646.70px;top:290.66px;font-size:9.5px;color:#444;font-weight:bold;font-style:normal;transform:scaleX(0.9488);transform-origin:0 0;">ProductKey</div>
<div class="t" style="left:719.20px;top:290.66px;font-size:9.5px;color:#444;font-weight:bold;font-style:normal;transform:scaleX(0.9404);transform-origin:0 0;">CustomerKey</div>
<div class="t" style="left:799.20px;top:290.66px;font-size:9.5px;color:#444;font-weight:bold;font-style:normal;transform:scaleX(0.9803);transform-origin:0 0;">TerritoryKey</div>
<div class="a" style="left:872px;top:286px;width:7px;height:18px;overflow:hidden"><div class="t" style="left:3.5px;top:5px;font-size:10px;font-weight:bold;color:#555">C</div></div>
<div class="t" style="left:320.57px;top:309.33px;font-size:10px;color:#444;font-weight:normal;font-style:italic;transform:scaleX(0.9400);transform-origin:0 0;">Sunday, January 1, 2017</div>
<div class="t" style="left:433.89px;top:309.33px;font-size:10px;color:#444;font-weight:normal;font-style:italic;transform:scaleX(0.9400);transform-origin:0 0;">Wednesday, October 1, 2003</div>
<div class="t" style="left:563.00px;top:309.93px;font-size:9.3px;color:#444;font-weight:normal;font-style:normal;transform:scaleX(0.9670);transform-origin:0 0;">SO61305</div>
<div class="t" style="left:695.51px;top:309.33px;font-size:10px;color:#444;font-weight:normal;font-style:italic;transform:scaleX(0.9400);transform-origin:0 0;">583</div>
<div class="t" style="left:765.06px;top:309.33px;font-size:10px;color:#444;font-weight:normal;font-style:italic;transform:scaleX(0.9400);transform-origin:0 0;">20236</div>
<div class="t" style="left:862.27px;top:309.33px;font-size:10px;color:#444;font-weight:normal;font-style:italic;transform:scaleX(0.9400);transform-origin:0 0;">9</div>
<div class="a" style="left:875px;top:304.0px;width:4px;height:18px;background:#fff"></div>
<div class="t" style="left:320.57px;top:327.83px;font-size:10px;color:#444;font-weight:normal;font-style:italic;transform:scaleX(0.9400);transform-origin:0 0;">Sunday, January 1, 2017</div>
<div class="t" style="left:452.02px;top:327.83px;font-size:10px;color:#444;font-weight:normal;font-style:italic;transform:scaleX(0.9400);transform-origin:0 0;">Friday, October 31, 2003</div>
<div class="t" style="left:563.00px;top:328.43px;font-size:9.3px;color:#444;font-weight:normal;font-style:normal;transform:scaleX(0.9670);transform-origin:0 0;">SO61276</div>
<div class="t" style="left:695.51px;top:327.83px;font-size:10px;color:#444;font-weight:normal;font-style:italic;transform:scaleX(0.9400);transform-origin:0 0;">488</div>
<div class="t" style="left:765.06px;top:327.83px;font-size:10px;color:#444;font-weight:normal;font-style:italic;transform:scaleX(0.9400);transform-origin:0 0;">17252</div>
<div class="t" style="left:862.27px;top:327.83px;font-size:10px;color:#444;font-weight:normal;font-style:italic;transform:scaleX(0.9400);transform-origin:0 0;">9</div>
<div class="a" style="left:875px;top:322.5px;width:4px;height:18px;background:#fff"></div>
<div class="t" style="left:320.57px;top:346.33px;font-size:10px;color:#444;font-weight:normal;font-style:italic;transform:scaleX(0.9400);transform-origin:0 0;">Sunday, January 1, 2017</div>
<div class="t" style="left:449.92px;top:346.33px;font-size:10px;color:#444;font-weight:normal;font-style:italic;transform:scaleX(0.9400);transform-origin:0 0;">Monday, October 6, 2003</div>
<div class="t" style="left:563.00px;top:346.93px;font-size:9.3px;color:#444;font-weight:normal;font-style:normal;transform:scaleX(0.9670);transform-origin:0 0;">SO61307</div>
<div class="t" style="left:695.51px;top:346.33px;font-size:10px;color:#444;font-weight:normal;font-style:italic;transform:scaleX(0.9400);transform-origin:0 0;">582</div>
<div class="t" style="left:765.06px;top:346.33px;font-size:10px;color:#444;font-weight:normal;font-style:italic;transform:scaleX(0.9400);transform-origin:0 0;">20260</div>
<div class="t" style="left:862.27px;top:346.33px;font-size:10px;color:#444;font-weight:normal;font-style:italic;transform:scaleX(0.9400);transform-origin:0 0;">9</div>
<div class="a" style="left:875px;top:341.0px;width:4px;height:18px;background:#fff"></div>
<div class="a" style="left:317px;top:360px;width:562px;height:16px;background:#f0f0f0"></div>
<div class="a" style="left:348px;top:361px;width:386px;height:14px;background:#c8c8c8"></div>
<svg style="left:332px;top:363px" width="8" height="10"><path d="M6.5 0.8 L2 5 L6.5 9.2" fill="none" stroke="#333" stroke-width="1.8"/></svg>
<svg style="left:856px;top:363px" width="8" height="10"><path d="M1.5 0.8 L6 5 L1.5 9.2" fill="none" stroke="#333" stroke-width="1.8"/></svg>
<div class="t" style="left:319.50px;top:392.01px;font-size:10.5px;color:#444;font-weight:normal;font-style:normal;transform:scaleX(0.9776);transform-origin:0 0;">Cardinality</div>
<div class="a" style="left:319px;top:408.2px;width:279px;height:19px;background:#fff;border:1px solid #e0e0e0"></div>
<div class="t" style="left:325.00px;top:413.71px;font-size:10.5px;color:#444;font-weight:normal;font-style:normal;">Many to Many (*:*)</div>
<svg style="left:586px;top:416px" width="5" height="3"><path d="M0 0 H5 L2.5 3 Z" fill="#555"/></svg>
<div class="t" style="left:602.00px;top:391.51px;font-size:10.5px;color:#444;font-weight:normal;font-style:normal;">Cross filter direction</div>
<div class="a" style="left:602px;top:408.2px;width:279px;height:19px;background:#fff;border:1px solid #e0e0e0"></div>
<div class="t" style="left:607.20px;top:413.71px;font-size:10.5px;color:#444;font-weight:normal;font-style:normal;transform:scaleX(0.9857);transform-origin:0 0;">Both</div>
<svg style="left:868px;top:416px" width="5" height="3"><path d="M0 0 H5 L2.5 3 Z" fill="#555"/></svg>
<div class="a" style="left:319.5px;top:438.7px;width:10.5px;height:10.5px;border:1px solid #555;background:#fff"></div>
<div class="t" style="left:335.00px;top:439.46px;font-size:10.5px;color:#444;font-weight:normal;font-style:normal;transform:scaleX(0.9946);transform-origin:0 0;">Make this relationship active</div>
<div class="a" style="left:602px;top:438.7px;width:10.5px;height:10.5px;border:1px solid #555;background:#fff"></div>
<div class="t" style="left:616.80px;top:440.21px;font-size:10.5px;color:#444;font-weight:normal;font-style:normal;transform:scaleX(1.0169);transform-origin:0 0;">Apply security filter in both directions</div>
<div class="a" style="left:319.5px;top:459.7px;width:10.5px;height:10.5px;border:1px solid #ddd;background:#fff"></div>
<div class="t" style="left:335.00px;top:460.21px;font-size:10.5px;color:#b0b0b0;font-weight:normal;font-style:normal;">Assume referential integrity</div>
<div class="a" style="left:317px;top:490px;width:566px;height:61px;background:#fef3a9;border:1px solid #ede39c"></div>
<svg style="left:323px;top:496px" width="26" height="26"><path d="M12 1 L23.5 12.5 L12 24 L0.5 12.5 Z" fill="#f2c98a" style="filter:blur(0.4px)"/><path d="M10.2 5.5 H13.8 L12.9 17.5 H11.1 Z" fill="#4f4434"/><rect x="10.8" y="18.8" width="2.4" height="2.4" fill="#4f4434"/></svg>
<div class="t" style="left:342.50px;top:497.71px;font-size:10.5px;color:#505050;font-weight:normal;font-style:normal;">This relationship has cardinality Many-Many. This should only be used if it is expected that neither column</div>
<div class="t" style="left:342.50px;top:515.21px;font-size:10.5px;color:#505050;font-weight:normal;font-style:normal;">(ProductKey and ProductKey) contains unique values, and that the significantly different behavior of Many-many</div>
<div class="t" style="left:342.50px;top:532.71px;font-size:10.5px;color:#505050;font-weight:normal;font-style:normal;transform:scaleX(0.9935);transform-origin:0 0;">relationships is understood.</div>
<div class="t" style="left:477.50px;top:532.71px;font-size:10.5px;color:#2b7fc2;font-weight:normal;font-style:normal;transform:scaleX(0.9683);transform-origin:0 0;">Learn more</div>
<svg style="left:444px;top:517px" width="12" height="18"><path d="M1 1 V14 L4 11 L6.5 16.5 L8.5 15.5 L6 10 H10 Z" fill="#fff" stroke="#333" stroke-width="0.9"/></svg>
<div class="a" style="left:766px;top:569px;width:52.5px;height:19px;background:#f2c811"></div>
<div class="t" style="left:785.70px;top:574.51px;font-size:10.5px;color:#323130;font-weight:normal;font-style:normal;transform:scaleX(0.8568);transform-origin:0 0;">OK</div>
<div class="a" style="left:830px;top:569px;width:53px;height:19px;background:#fff;border:1px solid #8a8886"></div>
<div class="t" style="left:843.50px;top:574.51px;font-size:10.5px;color:#323130;font-weight:normal;font-style:normal;transform:scaleX(0.8260);transform-origin:0 0;">Cancel</div>
</body></html>
